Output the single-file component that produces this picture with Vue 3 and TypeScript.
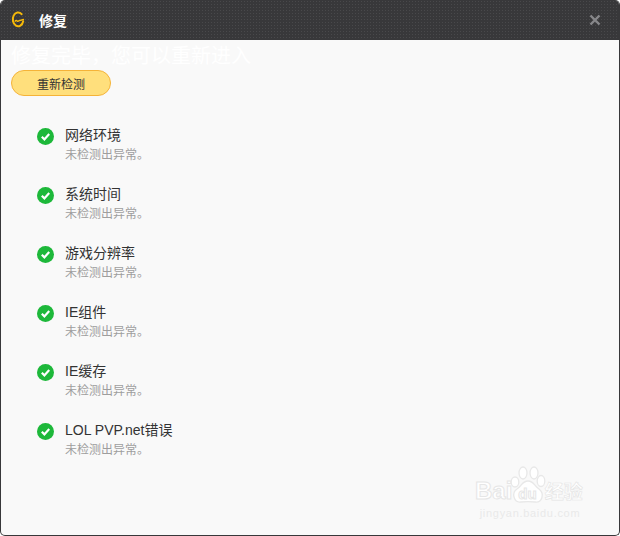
<script setup lang="ts">
const items: string[] = ['网络环境', '系统时间', '游戏分辨率', 'IE组件', 'IE缓存', 'LOL PVP.net错误']
</script>

<template>
  <div class="window">
    <header class="titlebar">
      <svg class="logo" width="14" height="18" viewBox="0 0 14 18" fill="none">
        <path d="M10.600 3.200A5.300 6.900 0 1 0 12.200 10.200" stroke="#f5b90a" stroke-width="2" stroke-linecap="round" />
        <path d="M4.200 10.200C5.400 8 6.400 11.400 7.800 9.800L12.400 8.600" stroke="#f5b90a" stroke-width="1.500" stroke-linecap="round" />
      </svg>
      <span class="title">修复</span>
      <svg class="close" width="12" height="12" viewBox="0 0 12 12">
        <path d="M1.500 1.500 10.500 10.500M10.500 1.500 1.500 10.500" stroke="#87878a" stroke-width="2.400" />
      </svg>
    </header>
    <main class="content">
      <h1 class="heading">修复完毕，您可以重新进入</h1>
      <button class="recheck" type="button">重新检测</button>
      <ul class="list">
        <li v-for="item in items" :key="item" class="row">
          <svg class="check" width="17" height="17" viewBox="0 0 17 17">
            <circle cx="8.500" cy="8.500" r="8.500" fill="#1db83a" />
            <path d="M4.800 8.800 7.400 11.400 12.200 6" fill="none" stroke="#fff" stroke-width="2.200" />
          </svg>
          <div class="texts">
            <div class="name">{{ item }}</div>
            <div class="desc">未检测出异常。</div>
          </div>
        </li>
      </ul>
    </main>
    <div class="watermark">
      <div class="brand">
        <span class="bai">Bai</span>
        <svg class="paw" width="36" height="38" viewBox="0 0 36 38" fill="none" stroke="#e8e8e8" stroke-width="1.300">
          <ellipse cx="5" cy="16" rx="3.800" ry="5" fill="#fff" />
          <ellipse cx="13" cy="7" rx="4" ry="6" fill="#fff" />
          <ellipse cx="24" cy="7" rx="4" ry="6" fill="#fff" />
          <ellipse cx="31" cy="15" rx="3.800" ry="5.500" fill="#fff" />
          <path d="M18 15C12 15 12 20 7 23 1 27 4 37 11 36 15 35.500 21 35.500 25 36 32 37 35 28 29 23 24 20 24 15 18 15Z" fill="#fff" />
        </svg>
        <span class="du">du</span>
        <span class="cn">经验</span>
      </div>
      <div class="url">jingyan.baidu.com</div>
    </div>
  </div>
</template>

<style>
html, body {
  margin: 0;
  background: #fff;
}
</style>

<style scoped>
.window {
  position: relative;
  box-sizing: border-box;
  width: 620px;
  height: 536px;
  display: flex;
  flex-direction: column;
  overflow: hidden;
  border-radius: 5px;
  border: 1px solid #38383a;
  border-top: 0;
  background: #f9f9f9;
  font-family: "Liberation Sans", "Noto Sans CJK SC", sans-serif;
}
.titlebar {
  flex: none;
  height: 40px;
  margin: 0 -1px;
  display: flex;
  align-items: center;
  padding: 0 19px 0 11px;
  background-color: #38383a;
  background-image: radial-gradient(circle at 1.500px 1.500px, #49494b 0.800px, transparent 1px);
  background-size: 3px 3px;
}
.logo {
  margin-right: 14px;
  margin-bottom: 1px;
}
.title {
  color: #fff;
  font: 700 14px "Noto Sans CJK SC", sans-serif;
}
.close {
  margin-left: auto;
}
.content {
  flex: 1;
  padding: 0 10px;
}
.heading {
  margin: 4px 0 0;
  color: #fff;
  font-size: 20px;
  font-weight: 400;
  line-height: 25px;
}
.recheck {
  display: block;
  box-sizing: border-box;
  width: 100px;
  height: 26px;
  margin: 1px 0 0;
  padding: 0;
  border: 1px solid #f5b338;
  border-radius: 13px;
  background: #ffdf7c;
  color: #333;
  font: 12px "Noto Sans CJK SC", sans-serif;
}
.list {
  list-style: none;
  margin: 29px 0 0;
  padding: 0 0 0 26px;
  display: flex;
  flex-direction: column;
  gap: 19px;
}
.row {
  display: flex;
  align-items: flex-start;
  gap: 11px;
}
.check {
  flex: none;
  margin-top: 3px;
}
.texts {
  height: 40px;
}
.name {
  color: #333;
  font-size: 14px;
  line-height: 20px;
}
.desc {
  color: #9e9e9e;
  font-size: 12px;
  line-height: 21px;
}
.watermark {
  position: absolute;
  right: 34px;
  bottom: 15px;
  width: 110px;
  color: #fff;
  text-align: center;
}
.brand {
  display: flex;
  align-items: flex-end;
  height: 38px;
  font: 700 24px/26px "Liberation Sans", sans-serif;
  -webkit-text-stroke: 1px #e6e6e6;
}
.bai {
  flex: none;
}
.paw {
  flex: none;
  margin: 0 -28px 0 -2px;
}
.du {
  flex: none;
  position: relative;
  font-size: 15px;
  line-height: 20px;
  margin-right: 8px;
}
.cn {
  flex: none;
  position: relative;
  font: 700 19px/26px "Noto Sans CJK SC", sans-serif;
  -webkit-text-stroke: 0.600px #e4e4e4;
}
.url {
  margin-top: 3px;
  font: 11px/13px "Liberation Sans", sans-serif;
  color: #e9e9e9;
  letter-spacing: 0.700px;
  white-space: nowrap;
}
</style>
